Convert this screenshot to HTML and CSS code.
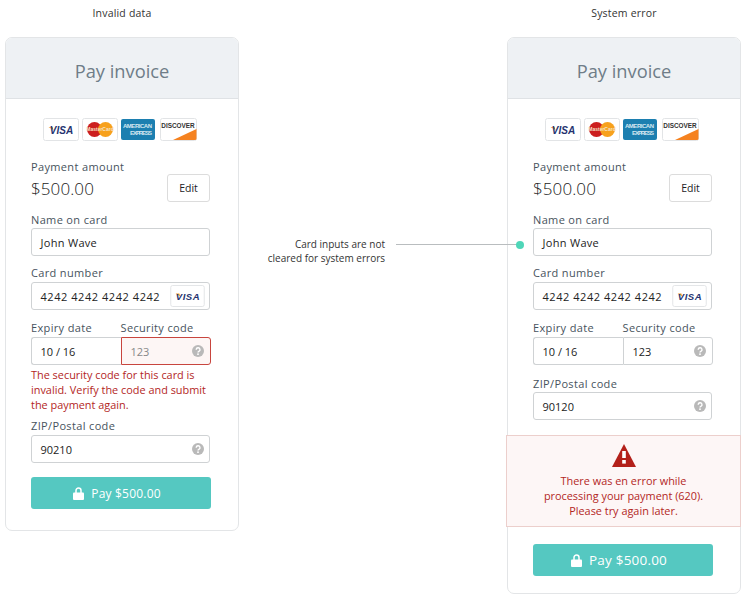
FILE: index.html
```html
<!DOCTYPE html>
<html lang="en">
<head>
    <meta charset="UTF-8">
    <title>Pay invoice - error states</title>
    <link rel="stylesheet" href="styles.css">
</head>
<body>
<svg class="sprites" width="0" height="0">
    <symbol id="help" viewBox="0 0 12 12">
        <circle cx="6" cy="6" r="6" fill="#b9b9b9"/>
        <path d="M4.2 4.7a1.9 1.9 0 1 1 2.7 1.7c-.6.3-.9.6-.9 1.2" fill="none" stroke="#fff" stroke-width="1.4"/>
        <rect x="5.2" y="8.4" width="1.6" height="1.6" fill="#fff"/>
    </symbol>
    <symbol id="lock" viewBox="0 0 11 13">
        <path d="M3 6V3.6a2.5 2.5 0 0 1 5 0V6" fill="none" stroke="#fff" stroke-width="1.5"/>
        <rect y="5.5" width="11" height="7.5" rx="1" fill="#fff"/>
    </symbol>
</svg>

<div class="board">
    <section class="column">
        <p class="caption">Invalid data</p>
        <div class="card">
            <h1 class="card-title">Pay invoice</h1>
            <div class="card-body">
                <div class="brands">
                    <svg class="brand" viewBox="0 0 36 23">
                        <rect x="0.5" y="0.5" width="35" height="22" rx="2" fill="#fff" stroke="#e2e4e6"/>
                        <path d="M5.5 9h4l.9 3z" fill="#f29a2e"/>
                        <text x="18.5" y="15.8" text-anchor="middle" class="visa-text">VISA</text>
                    </svg>
                    <svg class="brand" viewBox="0 0 36 23">
                        <rect x="0.5" y="0.5" width="35" height="22" rx="2" fill="#fff" stroke="#e2e4e6"/>
                        <circle cx="12.5" cy="11.5" r="7.5" fill="#cc1f1f"/>
                        <circle cx="23.5" cy="11.5" r="7.5" fill="#f7a11d"/>
                        <text x="18" y="13.2" text-anchor="middle" class="master-text">MasterCard</text>
                    </svg>
                    <svg class="brand" viewBox="0 0 36 23">
                        <rect y="1" width="34" height="21" rx="2" fill="#1c7fb0"/>
                        <text x="2" y="9.5" class="amex-text" textLength="29">AMERICAN</text>
                        <text x="9" y="16.5" class="amex-text" textLength="22">EXPRESS</text>
                    </svg>
                    <svg class="brand brand-wide" viewBox="0 0 37 23">
                        <rect x="0.5" y="0.5" width="36" height="22" rx="2" fill="#fff" stroke="#e2e4e6"/>
                        <path d="M13 22 L36.5 11 V20.5 Q36.5 22 35 22z" fill="#f58220"/>
                        <text x="18" y="10" text-anchor="middle" class="discover-text">DISCOVER</text>
                    </svg>
                </div>
                <div class="amount-row">
                    <div>
                        <div class="label">Payment amount</div>
                        <div class="amount">$500.00</div>
                    </div>
                    <div class="edit-btn">Edit</div>
                </div>
                <div class="label name-label">Name on card</div>
                <div class="input input-name">John Wave</div>
                <div class="label number-label">Card number</div>
                <div class="input input-number">
                    <span>4242 4242 4242 4242</span>
                    <svg class="brand brand-inline" viewBox="0 0 36 23">
                        <rect x="0.5" y="0.5" width="35" height="22" rx="2" fill="#fff" stroke="#e2e4e6"/>
                        <path d="M5.5 9h4l.9 3z" fill="#f29a2e"/>
                        <text x="18.5" y="15.8" text-anchor="middle" class="visa-text">VISA</text>
                    </svg>
                </div>
                <div class="split-labels">
                    <div class="label">Expiry date</div>
                    <div class="label">Security code</div>
                </div>
                <div class="split">
                    <div class="input input-expiry">10 / 16</div>
                    <div class="input input-code input-invalid">
                        <span>123</span>
                        <svg class="help"><use href="#help"/></svg>
                    </div>
                </div>
                <p class="field-error">The security code for this card is invalid. Verify the code and submit the payment again.</p>
                <div class="label zip-label zip-after-error">ZIP/Postal code</div>
                <div class="input input-zip">
                    <span>90210</span>
                    <svg class="help"><use href="#help"/></svg>
                </div>
                <div class="pay-btn">
                    <svg class="lock"><use href="#lock"/></svg>
                    Pay $500.00
                </div>
            </div>
        </div>
    </section>

    <section class="column">
        <p class="caption">System error</p>
        <div class="card">
            <h1 class="card-title">Pay invoice</h1>
            <div class="card-body">
                <div class="brands">
                    <svg class="brand" viewBox="0 0 36 23">
                        <rect x="0.5" y="0.5" width="35" height="22" rx="2" fill="#fff" stroke="#e2e4e6"/>
                        <path d="M5.5 9h4l.9 3z" fill="#f29a2e"/>
                        <text x="18.5" y="15.8" text-anchor="middle" class="visa-text">VISA</text>
                    </svg>
                    <svg class="brand" viewBox="0 0 36 23">
                        <rect x="0.5" y="0.5" width="35" height="22" rx="2" fill="#fff" stroke="#e2e4e6"/>
                        <circle cx="12.5" cy="11.5" r="7.5" fill="#cc1f1f"/>
                        <circle cx="23.5" cy="11.5" r="7.5" fill="#f7a11d"/>
                        <text x="18" y="13.2" text-anchor="middle" class="master-text">MasterCard</text>
                    </svg>
                    <svg class="brand" viewBox="0 0 36 23">
                        <rect y="1" width="34" height="21" rx="2" fill="#1c7fb0"/>
                        <text x="2" y="9.5" class="amex-text" textLength="29">AMERICAN</text>
                        <text x="9" y="16.5" class="amex-text" textLength="22">EXPRESS</text>
                    </svg>
                    <svg class="brand brand-wide" viewBox="0 0 37 23">
                        <rect x="0.5" y="0.5" width="36" height="22" rx="2" fill="#fff" stroke="#e2e4e6"/>
                        <path d="M13 22 L36.5 11 V20.5 Q36.5 22 35 22z" fill="#f58220"/>
                        <text x="18" y="10" text-anchor="middle" class="discover-text">DISCOVER</text>
                    </svg>
                </div>
                <div class="amount-row">
                    <div>
                        <div class="label">Payment amount</div>
                        <div class="amount">$500.00</div>
                    </div>
                    <div class="edit-btn">Edit</div>
                </div>
                <div class="label name-label">Name on card</div>
                <div class="input input-name">John Wave</div>
                <div class="label number-label">Card number</div>
                <div class="input input-number">
                    <span>4242 4242 4242 4242</span>
                    <svg class="brand brand-inline" viewBox="0 0 36 23">
                        <rect x="0.5" y="0.5" width="35" height="22" rx="2" fill="#fff" stroke="#e2e4e6"/>
                        <path d="M5.5 9h4l.9 3z" fill="#f29a2e"/>
                        <text x="18.5" y="15.8" text-anchor="middle" class="visa-text">VISA</text>
                    </svg>
                </div>
                <div class="split-labels">
                    <div class="label">Expiry date</div>
                    <div class="label">Security code</div>
                </div>
                <div class="split">
                    <div class="input input-expiry">10 / 16</div>
                    <div class="input input-code">
                        <span>123</span>
                        <svg class="help"><use href="#help"/></svg>
                    </div>
                </div>
                <div class="label zip-label">ZIP/Postal code</div>
                <div class="input input-zip">
                    <span>90120</span>
                    <svg class="help"><use href="#help"/></svg>
                </div>
            </div>
            <div class="system-error">
                <svg class="warning" viewBox="0 0 24 23">
                    <path d="M12 0 L24 23 H0z" fill="#b3201a"/>
                    <rect x="10.2" y="7" width="3.6" height="7" fill="#fff"/>
                    <rect x="10.2" y="16" width="3.6" height="3.6" fill="#fff"/>
                </svg>
                <p>There was en error while<br>processing your payment (620).<br>Please try again later.</p>
            </div>
            <div class="card-foot">
                <div class="pay-btn pay-btn-large">
                    <svg class="lock"><use href="#lock"/></svg>
                    Pay $500.00
                </div>
            </div>
        </div>
    </section>

    <!-- note sits over the right card, so it gets pinned -->
    <div class="note">
        <p class="note-text">Card inputs are not<br>cleared for system errors</p>
        <span class="note-line"></span>
        <span class="note-dot"></span>
    </div>
</div>
</body>
</html>
```

FILE: styles.css
```css
* {
    margin: 0;
    padding: 0;
    box-sizing: border-box;
}
body {
    font-family: 'Open Sans', sans-serif;
    color: #333;
    background: #fff;
    overflow: hidden;
}
.sprites {
    position: absolute;
}
.board {
    position: relative;
    display: flex;
    justify-content: space-between;
    width: 750px;
    height: 604px;
    padding: 0 9px 0 5px;
}
.column {
    width: 234px;
}
.caption {
    height: 37px;
    padding-top: 6px;
    font-size: 10.5px;
    line-height: 15px;
    letter-spacing: 0.2px;
    text-align: center;
    color: #333;
}
.card {
    border: 1.5px solid #e3e5e7;
    border-radius: 7px;
    background: #fff;
}
.card-title {
    height: 61px;
    border-bottom: 1.5px solid #dfe2e5;
    border-radius: 6px 6px 0 0;
    background: #eef1f4;
    font-size: 18.3px;
    font-weight: 400;
    line-height: 65px;
    text-align: center;
    color: #6f7d88;
}
.card-body {
    padding: 19px 28px 0 25px;
}
.card-body:last-child {
    padding-bottom: 21px;
}
.brands {
    display: flex;
    justify-content: center;
    gap: 3px;
    height: 23px;
    margin-left: -1px;
}
.brand {
    width: 36px;
    height: 23px;
}
.brand-wide {
    width: 37px;
}
.visa-text {
    font-family: 'Liberation Sans', sans-serif;
    font-size: 10px;
    font-weight: 700;
    font-style: italic;
    fill: #25336f;
}
.master-text {
    font-family: 'Liberation Sans', sans-serif;
    font-size: 5px;
    font-weight: 700;
    fill: #f5e3c8;
}
.amex-text {
    font-family: 'Liberation Sans', sans-serif;
    font-size: 6px;
    font-weight: 700;
    fill: #d5e8f0;
}
.discover-text {
    font-family: 'Liberation Sans', sans-serif;
    font-size: 6.4px;
    font-weight: 700;
    fill: #333;
}
.amount-row {
    display: flex;
    justify-content: space-between;
    align-items: flex-end;
    margin-top: 18px;
}
.label {
    height: 16px;
    font-size: 11px;
    font-weight: 400;
    line-height: 16px;
    letter-spacing: 0.35px;
    color: #47535d;
    white-space: nowrap;
}
.amount {
    height: 25px;
    margin-top: 1px;
    font-size: 17px;
    font-weight: 300;
    line-height: 26px;
    letter-spacing: 0.1px;
    color: #222;
}
.edit-btn {
    width: 43px;
    height: 28px;
    margin-bottom: -1px;
    border: 1px solid #dcdcdc;
    border-radius: 3px;
    font-size: 10.5px;
    line-height: 26px;
    text-align: center;
    color: #222;
}
.name-label {
    margin-top: 11px;
}
.number-label {
    margin-top: 9px;
    margin-bottom: 1px;
}
.input {
    display: flex;
    align-items: center;
    justify-content: space-between;
    width: 179px;
    height: 28px;
    padding: 0 8.5px;
    border: 1px solid #cfd2d4;
    border-radius: 3px;
    background: #fff;
    font-size: 11px;
    color: #222;
}
.input-name {
    letter-spacing: 0.3px;
}
.input-number {
    padding-right: 4px;
    letter-spacing: 0.55px;
    white-space: nowrap;
}
.brand-inline {
    flex: none;
    width: 35px;
    height: 22px;
}
.split-labels {
    display: flex;
    margin-top: 10px;
    margin-bottom: 1px;
}
.split-labels .label {
    width: 90px;
}
.split {
    display: flex;
    width: 180px;
}
.input-expiry {
    width: 90px;
    border-right: 0;
    border-radius: 3px 0 0 3px;
}
.input-code {
    width: 90px;
    border-radius: 0 3px 3px 0;
    padding-right: 6px;
}
.input-invalid {
    border-color: #c8453e;
    background: #fdf6f5;
    color: #888;
}
.input-zip {
    width: 179px;
    padding-right: 5px;
}
.help {
    flex: none;
    width: 12px;
    height: 12px;
}
.field-error {
    margin-top: 2px;
    width: 182px;
    font-size: 10.9px;
    line-height: 15px;
    color: #b3261e;
}
.zip-label {
    margin-top: 11px;
}
.zip-after-error {
    margin-top: 6px;
    margin-bottom: 1px;
}
.pay-btn {
    display: flex;
    align-items: center;
    justify-content: center;
    gap: 7px;
    width: 180px;
    height: 32px;
    margin-top: 14px;
    padding-right: 8px;
    border-radius: 3px;
    background: #55c8c1;
    font-size: 12px;
    font-weight: 400;
    letter-spacing: 0.2px;
    color: #fff;
}
.pay-btn-large {
    font-size: 13.5px;
}
.lock {
    width: 11px;
    height: 13px;
}
.system-error {
    width: 235px;
    height: 92px;
    margin: 15px 0 0 -2px;
    padding-top: 8px;
    border: 1px solid #eccfcc;
    background: #fdf6f6;
    text-align: center;
    font-size: 10.9px;
    line-height: 15px;
    color: #b3261e;
}
.warning {
    display: block;
    width: 24px;
    height: 23px;
    margin: 0 auto 6px;
}
.card-foot {
    padding: 3px 28px 17px 25px;
}
.note {
    position: absolute;
    left: 250px;
    top: 237px;
    width: 275px;
    height: 30px;
}
.note-text {
    width: 135px;
    font-size: 10px;
    line-height: 14px;
    text-align: right;
    color: #333;
}
.note-line {
    position: absolute;
    left: 146px;
    top: 7px;
    width: 122px;
    height: 1px;
    background: #b9bdbf;
}
.note-dot {
    position: absolute;
    left: 266px;
    top: 3.5px;
    width: 8px;
    height: 8px;
    border-radius: 50%;
    background: #4fd6b8;
}
```
